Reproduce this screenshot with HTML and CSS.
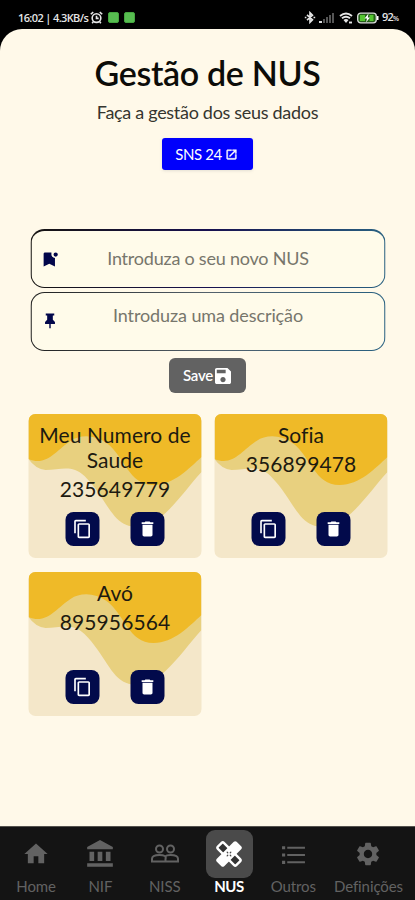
FILE: index.html
```html
<!DOCTYPE html>
<html lang="pt">
<head>
<meta charset="utf-8">
<meta name="viewport" content="width=device-width">
<title>Gestão de NUS</title>
<link rel="stylesheet" href="styles.css">
</head>
<body>
<svg class="defs" aria-hidden="true">
  <symbol id="copy" viewBox="0 0 24 24"><path d="M16 1H4c-1.1 0-2 .9-2 2v14h2V3h12V1zm3 4H8c-1.1 0-2 .9-2 2v14c0 1.1.9 2 2 2h11c1.1 0 2-.9 2-2V7c0-1.1-.9-2-2-2zm0 16H8V7h11v14z"/></symbol>
  <symbol id="trash" viewBox="0 0 24 24"><path d="M6 19c0 1.1.9 2 2 2h8c1.1 0 2-.9 2-2V7H6v12zM19 4h-3.5l-1-1h-5l-1 1H5v2h14V4z"/></symbol>
  <symbol id="waves" viewBox="0 0 173 144" preserveAspectRatio="none">
    <path fill="#e8d07f" d="M0 0H173V58C161 71 150 87 137 99C123 111 109 115 98 111C82 105 76 82 56 62C43 50 32 56 17 56Q7 55 0 45Z"/>
    <path fill="#efba28" d="M0 0H173V43C161 54 145 71 125 71C100 71 96 42 78 29C67 21 52 20 42 27C28 36 18 53 0 45Z"/>
  </symbol>
</svg>
<div class="phone">
  <header class="status">
    <span class="status-text">16:02 | 4.3KB/s</span>
    <svg class="alarm" viewBox="0 0 12 12"><circle cx="6" cy="6.5" r="4"/><path d="M6 4.3v2.5h2M.7 3L3 1M11.3 3L9 1M3 10l-1 1.3M9 10l1 1.3"/></svg>
    <i class="app"></i><i class="app"></i>
    <span class="grow"></span>
    <svg class="bt" viewBox="0 0 12 12"><path d="M3 3.3l5.5 5L6 10.8V1.2l2.5 2.5-5.5 5M.8 6h1.6M9.5 6h1.7"/></svg>
    <svg class="signal" viewBox="0 0 16 12"><path fill="#ddd" d="M0 9h3v2H0z"/><path fill="#555" d="M4 7h2v4H4zM7 5h2v6H7zM10 3h2v8h-2zM13 1h2v10h-2z"/></svg>
    <svg class="wifi" viewBox="0 0 14 12"><path d="M1 4Q7-1 13 4M3 6.3Q7 3 11 6.3"/><path class="solid" d="M4.5 8Q7 6 9.5 8L7 11z"/><path d="M10 10.5h3"/></svg>
    <svg class="battery" viewBox="0 0 22 12"><rect x=".7" y="1.2" width="18.6" height="9.6" rx="3" fill="#235d17" stroke="#ddd" stroke-width="1.3"/><path fill="#55c631" d="M3 3h5v6H3zM12.5 3h4v6h-4z"/><path fill="#fff" d="M11.5 1.5L7.5 6.5H10l-1 4 4-5H10.8zM20 4h1.5v4H20z"/></svg>
    <span class="percent">92<small>%</small></span>
  </header>
  <main>
    <h1>Gestão de NUS</h1>
    <p class="subtitle">Faça a gestão dos seus dados</p>
    <button class="sns"><span>SNS 24</span><svg viewBox="0 0 24 24"><path d="M19 19H5V5h7V3H5c-1.11 0-2 .9-2 2v14c0 1.1.89 2 2 2h14c1.1 0 2-.9 2-2v-7h-2v7zM14 3v2h3.59l-9.83 9.83 1.41 1.41L19 6.41V10h2V3h-7z"/></svg></button>
    <div class="field first">
      <svg viewBox="0 0 24 24"><path d="M14 2H5q-2 0-2 2v18l8-4 8 4V10q-5-1-5-5z"/><circle cx="20" cy="5" r="3"/></svg>
      <span>Introduza o seu novo NUS</span>
    </div>
    <div class="field second">
      <svg viewBox="0 0 24 24"><path d="M16 11V5h2V2H6v3h2v6l-3 3v3h6v6h2v-6h6v-3z"/></svg>
      <span>Introduza uma descrição</span>
    </div>
    <button class="save"><span>Save</span><svg viewBox="3 3 18 18"><path d="M17 3H5c-1.11 0-2 .9-2 2v14c0 1.1.89 2 2 2h14c1.1 0 2-.9 2-2V7l-4-4zm-5 16c-1.66 0-3-1.34-3-3s1.34-3 3-3 3 1.34 3 3-1.34 3-3 3zm3-10H5V5h10v4z"/></svg></button>
    <section class="cards">
      <article class="card">
        <svg class="wave"><use href="#waves"/></svg>
        <h2>Meu Numero de Saude</h2><p>235649779</p>
        <div class="actions"><button><svg><use href="#copy"/></svg></button><button><svg><use href="#trash"/></svg></button></div>
      </article>
      <article class="card">
        <svg class="wave"><use href="#waves"/></svg>
        <h2>Sofia</h2><p>356899478</p>
        <div class="actions"><button><svg><use href="#copy"/></svg></button><button><svg><use href="#trash"/></svg></button></div>
      </article>
      <article class="card">
        <svg class="wave"><use href="#waves"/></svg>
        <h2>Avó</h2><p>895956564</p>
        <div class="actions"><button><svg><use href="#copy"/></svg></button><button><svg><use href="#trash"/></svg></button></div>
      </article>
    </section>
  </main>
  <nav>
    <a><span class="icon"><svg viewBox="0 0 24 24"><path d="M10 20v-6h4v6h5v-8h3L12 3 2 12h3v8z"/></svg></span><b>Home</b></a>
    <a><span class="icon"><svg class="bank" viewBox="0 0 24 24"><path d="M12 0L1 6v2h22V6zM3 10v8h4v-8zM10 10v8h4v-8zM17 10v8h4v-8zM1 20h22v3H1z"/></svg></span><b>NIF</b></a>
    <a><span class="icon"><svg class="people" viewBox="0 0 28 20"><circle cx="8.5" cy="5" r="3.5"/><circle cx="19.5" cy="5" r="3.5"/><path d="M1 17.5v-2.7Q1 11 8.5 11t6 4v2.5zM14.5 17.5H27v-2.7Q27 11 19.5 11q-4 0-5.5 1.5"/></svg></span><b>NISS</b></a>
    <a class="active"><span class="icon"><svg class="healing" viewBox="0 0 26 26"><g transform="rotate(45 13 13)"><rect class="outline" x="0" y="8.8" width="26" height="8.4" rx="1.5"/><rect x="7.8" y="-1" width="10.4" height="28" rx="2"/><path class="center" d="M13 10.4v.8M13 14.8v.8M10.4 13h.8M14.8 13h.8"/></g></svg></span><b>NUS</b></a>
    <a><span class="icon"><svg class="list" viewBox="0 0 24 24"><path d="M1 4h3v3H1zM6 4.5h17v2H6zM1 11h3v3H1zM6 11.5h17v2H6zM1 18h3v3H1zM6 18.5h17v2H6z"/></svg></span><b>Outros</b></a>
    <a class="wide"><span class="icon"><svg viewBox="0 0 24 24"><path d="M19.14 12.94c.04-.3.06-.61.06-.94 0-.32-.02-.64-.07-.94l2.03-1.58c.18-.14.23-.41.12-.61l-1.92-3.32c-.12-.22-.37-.29-.59-.22l-2.39.96c-.5-.38-1.03-.7-1.62-.94l-.36-2.54c-.04-.24-.24-.41-.48-.41h-3.84c-.24 0-.43.17-.47.41l-.36 2.54c-.59.24-1.13.57-1.62.94l-2.39-.96c-.22-.08-.47 0-.59.22L2.74 8.87c-.12.21-.08.47.12.61l2.03 1.58c-.05.3-.09.63-.09.94s.02.64.07.94l-2.03 1.58c-.18.14-.23.41-.12.61l1.92 3.32c.12.22.37.29.59.22l2.39-.96c.5.38 1.03.7 1.62.94l.36 2.54c.05.24.24.41.48.41h3.84c.24 0 .44-.17.47-.41l.36-2.54c.59-.24 1.13-.56 1.62-.94l2.39.96c.22.08.47 0 .59-.22l1.92-3.32c.12-.22.07-.47-.12-.61l-2.01-1.58zM12 15.6c-1.98 0-3.6-1.62-3.6-3.6s1.62-3.6 3.6-3.6 3.6 1.62 3.6 3.6-1.62 3.6-3.6 3.6z"/></svg></span><b>Definições</b></a>
  </nav>
</div>
</body>
</html>
```
FILE: styles.css
```css
* { box-sizing: border-box; }
body { margin: 0; background: #000; font-family: Lato, "Liberation Sans", sans-serif; }
h1, h2, p { margin: 0; }
button { border: 0; padding: 0; font-family: inherit; color: #fff; display: flex; align-items: center; justify-content: center; }
svg { display: block; fill: currentColor; flex: none; }
.defs { position: absolute; width: 0; height: 0; }
.phone { width: 415px; height: 900px; display: flex; flex-direction: column; }

.status { height: 29px; padding: 6px 16px 0 18px; display: flex; align-items: center; color: #e6e6e6; font: 600 11px/22px "Open Sans", sans-serif; }
.status-text { width: 72px; white-space: nowrap; letter-spacing: -0.62px; }
.alarm { width: 13px; height: 13px; fill: none; stroke: currentColor; stroke-width: 1.5; margin-right: 5px; }
.app { width: 11px; height: 11px; border-radius: 2px; background: #57bd50; border: 1px solid #45a53f; margin-right: 5px; }
.grow { flex: 1; }
.bt { width: 12px; height: 13px; fill: none; stroke: currentColor; stroke-width: 1.6; margin-right: 3px; }
.signal { width: 16px; height: 12px; margin-right: 4px; }
.wifi { width: 14px; height: 12px; fill: none; stroke: currentColor; stroke-width: 1.9; margin-right: 4px; }
.wifi .solid { fill: currentColor; stroke: none; }
.battery { width: 22px; height: 12px; margin-right: 3px; }
.percent { width: 17px; font-size: 11px; letter-spacing: -0.8px; white-space: nowrap; }
.percent small { font-size: 7px; }

main { flex: 1; background: #fff9e9; border-radius: 22px 22px 0 0; display: flex; flex-direction: column; align-items: center; }
h1 { margin-top: 23px; height: 44px; font-size: 34px; line-height: 42px; font-weight: 600; color: #0c0c08; letter-spacing: -0.33px; white-space: nowrap; }
.subtitle { margin-top: 4px; height: 24px; font-size: 18px; line-height: 24px; color: #35352f; letter-spacing: -0.3px; white-space: nowrap; }
.sns { margin-top: 14px; width: 91px; height: 32px; border-radius: 3px; background: #0000fc; gap: 3px; font-size: 15px; padding-right: 2px; box-shadow: 0 1px 3px #9994; letter-spacing: -0.4px; }
.sns svg { width: 13px; height: 13px; stroke: currentColor; stroke-width: 0.8; }

.field { width: 355px; height: 59px; border: 1.5px solid transparent; border-radius: 14px; background: linear-gradient(#fffbea, #fffbea) padding-box, linear-gradient(90deg, #20201f, #54616b 50%, #286080) border-box; display: flex; align-items: center; color: #02064a; transform: translateX(0.5px); }
.field.first { margin-top: 59px; border-top-width: 2px; background: linear-gradient(#fffbea, #fffbea) padding-box, linear-gradient(90deg, #161411, #17104f 50%, #286080) border-box; }
.field.second { margin-top: 4px; }
.field svg { width: 17px; height: 17px; margin-left: 10px; }
.field span { flex: 1; text-align: center; color: #77766c; font-size: 18px; line-height: 24px; white-space: nowrap; padding-right: 27px; letter-spacing: -0.22px; margin-bottom: 2px; }
.second span { margin-bottom: 13px; letter-spacing: -0.1px; }
.field.second svg { margin-bottom: 2px; }
.save { margin-top: 7px; width: 77px; height: 35px; border-radius: 6px; background: #626262; font-size: 15px; font-weight: 600; letter-spacing: -0.25px; gap: 2px; padding-right: 1px; }
.save span { margin-top: -2px; }
.save svg { width: 16px; height: 16px; }

.cards { margin-top: 21px; width: 359px; display: grid; grid-template-columns: 173px 173px; gap: 14px 13px; transform: translateX(0.5px); }
.card { position: relative; height: 144px; border-radius: 7px; overflow: hidden; background: #f4e7c9; color: #1d1a10; display: flex; flex-direction: column; align-items: center; padding-top: 8px; }
.wave { position: absolute; inset: 0; width: 100%; height: 100%; }
.card h2, .card p, .actions { position: relative; }
.card h2 { font-size: 21px; font-weight: 400; line-height: 25px; text-align: center; width: 160px; letter-spacing: 0.05px; }
.card p { font-size: 21px; line-height: 25px; margin-top: 4px; letter-spacing: 0.1px; }
.actions { display: flex; gap: 31px; width: 99px; margin-top: auto; margin-bottom: 12px; }
.actions button { width: 34px; height: 34px; background: #020a4b; border-radius: 8px; }
.actions svg { width: 20px; height: 20px; }

nav { height: 74px; background: #141414; border-top: 1px solid #55534e; display: flex; padding: 3px 0 0 4px; }
nav a { width: 64.3px; flex: none; display: flex; flex-direction: column; align-items: center; color: #626262; }
nav .wide { width: 86px; }
nav .icon { width: 47px; height: 48px; border-radius: 9px; display: flex; align-items: center; justify-content: center; }
nav svg { width: 28px; height: 28px; }
nav .people { width: 28px; height: 20px; fill: none; stroke: currentColor; stroke-width: 2; }
nav .list { width: 25px; height: 25px; }
nav .healing { width: 26px; height: 26px; }
nav b { font-size: 15px; line-height: 17px; font-weight: 400; white-space: nowrap; letter-spacing: -0.1px; }
nav .active { color: #fff; }
.active .icon { background: #4a4a4a; }
.active b { font-weight: 700; letter-spacing: -0.4px; }
.outline { fill: #333; stroke: currentColor; stroke-width: 2.4; }
.center { fill: none; stroke: #4a4a4a; stroke-width: 1.3; stroke-linecap: round; }
```
